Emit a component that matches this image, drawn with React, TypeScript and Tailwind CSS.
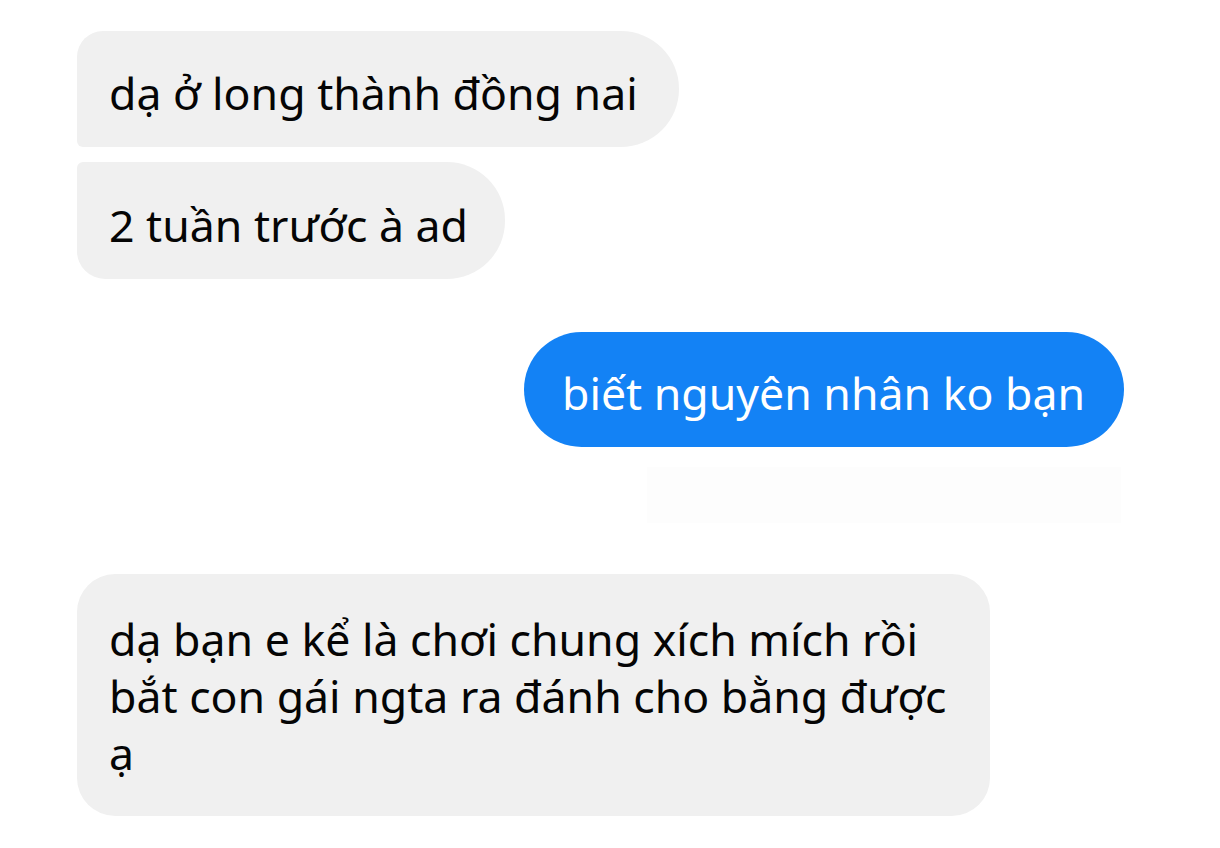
export default function App() {
  const font = { fontFamily: '"Noto Sans", "Open Sans", sans-serif' };
  return (
    <div className="min-h-[848px] w-[1220px] bg-white text-[#050505]" style={font}>
      <div className="flex flex-col pl-[77px] pr-[96px] pt-[31px]">
        <div className="flex h-[116px] w-[602px] items-center rounded-tl-[26px] rounded-bl-[6px] rounded-r-[58px] bg-[#f0f0f0] pt-[8px] pl-[32px] text-[44.6px] leading-[56px] whitespace-nowrap">
          dạ ở long thành đồng nai
        </div>
        <div className="mt-[15px] flex h-[117px] w-[428px] items-center rounded-tl-[6px] rounded-bl-[28px] rounded-r-[58px] bg-[#f0f0f0] pt-[8px] pl-[32px] text-[44.6px] leading-[56px] whitespace-nowrap">
          2 tuần trước à ad
        </div>
        <div className="mt-[53px] flex h-[115px] w-[600px] items-center self-end rounded-[58px] bg-[#1382f5] pt-[6px] pl-[38px] text-[44.6px] leading-[56px] text-white whitespace-nowrap">
          biết nguyên nhân ko bạn
        </div>
        <div className="mt-[20px] mr-[3px] h-[56px] w-[474px] self-end bg-[#fdfdfd]" />
        <div className="mt-[51px] flex w-[913px] flex-col rounded-[38px] bg-[#f0f0f0] pt-[36px] pb-[35px] pl-[32px] text-[44.6px] leading-[57px] whitespace-nowrap">
          <span>dạ bạn e kể là chơi chung xích mích rồi</span>
          <span>bắt con gái ngta ra đánh cho bằng được</span>
          <span>ạ</span>
        </div>
      </div>
    </div>
  );
}
